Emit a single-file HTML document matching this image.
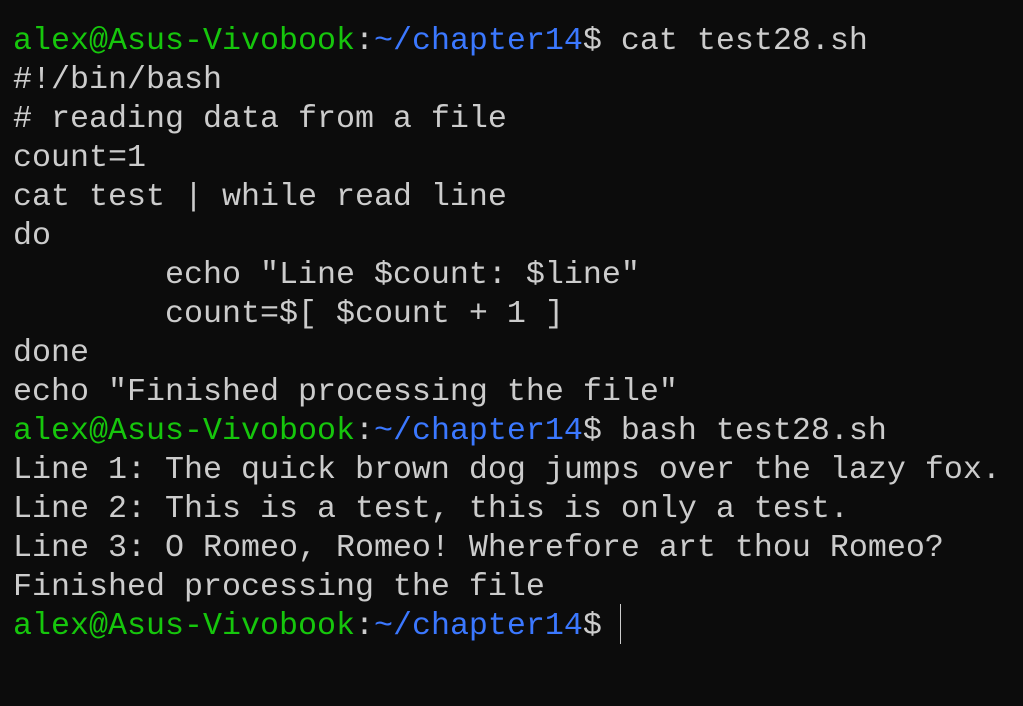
<!DOCTYPE html>
<html><head><meta charset="utf-8"><style>
html,body{margin:0;padding:0;background:#0c0c0c;width:1023px;height:706px;overflow:hidden}
pre{margin:0;position:absolute;left:13px;top:22px;font-family:"Liberation Mono","DejaVu Sans Mono",monospace;font-size:31.67px;line-height:39px;color:#cccccc;white-space:pre}
.g{color:#16c60c}.b{color:#3b78ff}
.cur{position:absolute;left:620px;top:604px;width:1px;height:40px;background:#cccccc}
</style></head><body>
<pre><span class="g">alex@Asus-Vivobook</span>:<span class="b">~/chapter14</span>$ cat test28.sh
#!/bin/bash
# reading data from a file
count=1
cat test | while read line
do
        echo "Line $count: $line"
        count=$[ $count + 1 ]
done
echo "Finished processing the file"
<span class="g">alex@Asus-Vivobook</span>:<span class="b">~/chapter14</span>$ bash test28.sh
Line 1: The quick brown dog jumps over the lazy fox.
Line 2: This is a test, this is only a test.
Line 3: O Romeo, Romeo! Wherefore art thou Romeo?
Finished processing the file
<span class="g">alex@Asus-Vivobook</span>:<span class="b">~/chapter14</span>$ </pre>
<div class="cur"></div>
</body></html>
